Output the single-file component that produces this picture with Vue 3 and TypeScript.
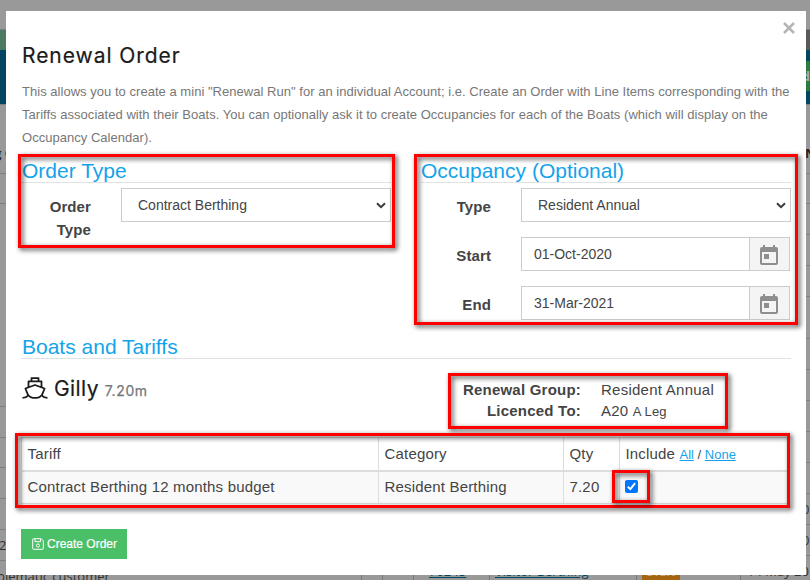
<script setup lang="ts">
import { ref } from 'vue'

interface Tariff {
  name: string
  category: string
  qty: string
  include: boolean
}

const orderType = ref('Contract Berthing')
const occupancyType = ref('Resident Annual')
const dates = ref([
  { label: 'Start', value: '01-Oct-2020' },
  { label: 'End', value: '31-Mar-2021' },
])
const tariffs = ref<Tariff[]>([
  { name: 'Contract Berthing 12 months budget', category: 'Resident Berthing', qty: '7.20', include: true },
])
const setAll = (value: boolean) => tariffs.value.forEach((t) => (t.include = value))
</script>

<template>
  <div class="page">
    <div class="backdrop" aria-hidden="true">
      <div class="strip photo"></div>
      <div class="strip nav"></div>
      <span class="nav-btn">d</span>
      <i v-for="n in 3" :key="'a' + n" class="rule left" :class="'la' + n"></i>
      <i v-for="n in 5" :key="'b' + n" class="rule left" :class="'lb' + n"></i>
      <i v-for="n in 13" :key="'c' + n" class="rule right" :class="'r' + n"></i>
      <b class="bit h-left">g C</b>
      <b class="bit h-right">N</b>
      <span class="bit two">2</span>
      <span class="bit customer">blematic customer</span>
      <span class="bit order-no">70245</span>
      <span class="bit berthing">Visitor Berthing</span>
      <span class="bit tag">Draft</span>
      <span class="bit date">14 May 20</span>
      <span class="bit z1">0</span>
      <span class="bit z2">0</span>
      <i v-for="n in 6" :key="'v' + n" class="vrule" :class="'v' + n"></i>
    </div>

    <section class="modal">
      <button class="close" aria-label="Close">
        <svg width="12" height="12" viewBox="0 0 12 12"><path d="M1 1 11 11M11 1 1 11" stroke="#b5b5b5" stroke-width="2.5" /></svg>
      </button>
      <h1><span>Renewal Order</span></h1>
      <p class="intro">
        <span class="i1">This allows you to create a mini "Renewal Run" for an individual Account; i.e. Create an Order with Line Items corresponding with the</span><br />
        <span class="i2">Tariffs associated with their Boats. You can optionally ask it to create Occupancies for each of the Boats (which will display on the</span><br />
        <span class="i3">Occupancy Calendar).</span>
      </p>

      <div class="columns">
        <div class="column">
          <h2><span>Order Type</span></h2>
          <div class="field">
            <label>Order<br />Type</label>
            <div class="select">
              <span>{{ orderType }}</span>
              <svg width="10" height="7" viewBox="0 0 10 7"><path d="M1 1.2 5 5.2 9 1.2" fill="none" stroke="#3a3a3a" stroke-width="2" /></svg>
            </div>
          </div>
        </div>
        <div class="column">
          <h2 class="occ"><span>Occupancy (Optional)</span></h2>
          <div class="field">
            <label>Type</label>
            <div class="select">
              <span>{{ occupancyType }}</span>
              <svg width="10" height="7" viewBox="0 0 10 7"><path d="M1 1.2 5 5.2 9 1.2" fill="none" stroke="#3a3a3a" stroke-width="2" /></svg>
            </div>
          </div>
          <div v-for="d in dates" :key="d.label" class="field">
            <label>{{ d.label }}</label>
            <div class="date-input">
              <span>{{ d.value }}</span>
              <div class="addon">
                <svg width="18" height="20" viewBox="0 0 18 20">
                  <path fill="#8e8e8e" fill-rule="evenodd" d="M3 0H5V2H13V0H15V2H16Q18 2 18 4V18Q18 20 16 20H2Q0 20 0 18V4Q0 2 2 2H3ZM2 7V18H16V7ZM4 9H9V14H4Z" />
                </svg>
              </div>
            </div>
          </div>
        </div>
      </div>

      <h2 class="boats"><span>Boats and Tariffs</span></h2>
      <div class="boat">
        <div class="boat-name">
          <svg width="26" height="22" viewBox="0 0 26 22" fill="none" stroke="#1b1b1b" stroke-width="1.8" stroke-linejoin="round">
            <path d="M9.5 4V1.2H16.5V4M6.5 10V4.4H19.5V10M6.2 18.3 3.4 11.5 13 8 22.6 11.5 19.8 18.3M.5 20.8C4 20.8 5 19.8 6.3 18.3 7.6 20 9 20.8 11 20.8H15C17 20.8 18.4 20 19.7 18.3 21 19.8 22 20.8 25.5 20.8" />
          </svg>
          <span class="gilly">Gilly</span>
          <span class="length">7.20m</span>
        </div>
        <dl>
          <dt class="rg">Renewal Group:</dt>
          <dd>Resident Annual</dd>
          <dt class="lt">Licenced To:</dt>
          <dd class="a20">A20 <small>A Leg</small></dd>
        </dl>
      </div>

      <table>
        <colgroup><col class="c1" /><col class="c2" /><col class="c3" /><col /></colgroup>
        <thead>
          <tr>
            <th>Tariff</th>
            <th>Category</th>
            <th>Qty</th>
            <th>Include <small><a @click="setAll(true)">All</a> / <a @click="setAll(false)">None</a></small></th>
          </tr>
        </thead>
        <tbody>
          <tr v-for="t in tariffs" :key="t.name">
            <td><span class="tn">{{ t.name }}</span></td>
            <td>{{ t.category }}</td>
            <td>{{ t.qty }}</td>
            <td class="include">
              <span class="check" role="checkbox" :aria-checked="t.include" @click="t.include = !t.include">
                <svg v-if="t.include" width="13" height="13" viewBox="0 0 13 13"><path d="M2.8 6.8 5.3 9.2 10.1 3.2" fill="none" stroke="#fff" stroke-width="1.9" /></svg>
              </span>
            </td>
          </tr>
        </tbody>
      </table>

      <button class="create">
        <svg width="12" height="12" viewBox="0 0 12 12" fill="none" stroke="#fff">
          <path d="M.7 1.5Q.7.7 1.5.7H9.2L11.3 2.8V10.5Q11.3 11.3 10.5 11.3H1.5Q.7 11.3.7 10.5ZM3 .7V3.7H8.5V.7" />
          <circle cx="6" cy="7.5" r="1.6" />
        </svg>
        <span>Create Order</span>
      </button>
    </section>

    <div class="mark m1"></div>
    <div class="mark m2"></div>
    <div class="mark m3"></div>
    <div class="mark m4"></div>
    <div class="mark m5"></div>
  </div>
</template>

<style>
body { margin: 0; overflow: hidden; }
</style>

<style scoped>
* { box-sizing: border-box; }
.page {
  position: relative;
  width: 810px;
  height: 580px;
  padding: 11px 4px 5px 6px;
  overflow: hidden;
  background: #999;
  color: #444;
  font-family: "Liberation Sans", Arial, sans-serif;
}
.backdrop { position: absolute; inset: 0; overflow: hidden; }
.strip { position: absolute; left: 0; width: 810px; }
.photo { top: 29px; height: 21px; background: linear-gradient(90deg, #4a7a62 0 400px, #5a5a5a 400px); border-top: 1px solid #808080; }
.nav { top: 50px; height: 55px; background: #044661; border-bottom: 1px solid #808080; }
.nav-btn { position: absolute; left: 796px; top: 61px; width: 14px; height: 30px; background: #2c7a44; color: #aaa; font: bold 13px/31px "Open Sans", sans-serif; text-align: right; }
.rule { position: absolute; height: 1px; background: #808080; }
.left { left: 0; width: 6px; }
.right { left: 806px; width: 4px; }
.la1 { top: 173px; } .la2 { top: 203px; } .la3 { top: 406px; }
.lb1 { top: 437px; } .lb2 { top: 467px; } .lb3 { top: 498px; } .lb4 { top: 529px; } .lb5 { top: 560px; }
.r1 { top: 173px; } .r2 { top: 203px; } .r3 { top: 234px; } .r4 { top: 265px; } .r5 { top: 296px; } .r6 { top: 338px; } .r7 { top: 369px; }
.r8 { top: 400px; } .r9 { top: 431px; } .r10 { top: 462px; } .r11 { top: 493px; } .r12 { top: 524px; } .r13 { top: 555px; }
.bit { position: absolute; white-space: nowrap; font: 13px/18px "Open Sans", sans-serif; color: #333; }
b.bit { font-weight: 700; color: #222; }
.h-left { left: -6px; top: 144px; }
.h-right { left: 805px; top: 144px; }
.two { left: -1px; top: 536px; }
.customer { left: -3px; top: 567px; }
.order-no { left: 429px; top: 562px; color: #044661; text-decoration: underline; }
.berthing { left: 495px; top: 562px; color: #044661; text-decoration: underline; }
.tag { left: 642px; top: 560px; width: 38px; height: 20px; background: #a5640f; color: #c8a87b; text-align: center; font-weight: 700; font-size: 11px; line-height: 24px; }
.date { left: 747px; top: 562px; }
.z1 { left: 802px; top: 500px; }
.z2 { left: 802px; top: 531px; }
.vrule { position: absolute; top: 575px; width: 1px; height: 5px; background: #777; }
.v1 { left: 361px; } .v2 { left: 382px; } .v3 { left: 413px; } .v4 { left: 489px; } .v5 { left: 636px; } .v6 { left: 740px; }

.modal { position: relative; width: 800px; height: 564px; padding: 33px 15px 0; background: #fff; }
.close { position: absolute; top: 11px; right: 11px; width: 12px; height: 12px; padding: 0; border: 0; background: none; line-height: 0; }
h1 { margin: 0; padding-left: 1px; height: 24px; font: 400 21px/24px Inter, sans-serif; letter-spacing: .95px; color: #1b1b1b; -webkit-text-stroke: .2px #1b1b1b; white-space: nowrap; }
.intro { margin: 12px 0 0; padding-left: 1px; height: 69px; font-size: 13px; line-height: 23px; color: #777; white-space: nowrap; }
.intro span { letter-spacing: .03px; }
.columns { display: flex; gap: 30px; margin-top: 11px; height: 176px; }
.column { width: 370px; }
h2 { margin: 0; height: 23px; border-bottom: 1px solid #e2e2e2; font-weight: 400; font-size: 21px; line-height: 21px; color: #14a3ea; padding-left: 1px; white-space: nowrap; }
.columns h2 { margin-bottom: 5px; }
h2.occ { padding-left: 0; }
.field { display: flex; height: 34px; margin-bottom: 15px; }
label { flex: none; width: 100px; padding: 7px 30px 0 0; text-align: right; font-weight: 700; font-size: 15px; line-height: 23px; letter-spacing: .1px; }
.select { display: flex; align-items: center; justify-content: space-between; width: 270px; height: 34px; padding: 0 4px 0 16px; border: 1px solid #ccc; font-size: 14px; }
.date-input { display: flex; width: 269px; height: 34px; border: 1px solid #ccc; font-size: 14px; }
.date-input span { flex: 1; padding-left: 12px; line-height: 32px; }
.addon { display: flex; align-items: center; justify-content: center; width: 40px; padding: 2px 2px 0 0; border-left: 1px solid #ccc; background: #f4f4f4; }
.boat { display: flex; justify-content: space-between; height: 78px; padding-top: 17px; }
.boat-name { display: flex; align-items: flex-start; padding: 1px 0 0 1px; color: #1b1b1b; }
.gilly { margin-left: 6px; font: 400 21px/24px Inter, sans-serif; letter-spacing: .4px; -webkit-text-stroke: .2px #1b1b1b; }
.length { margin-left: 6px; font: 400 14px/27px Inter, sans-serif; letter-spacing: .6px; color: #777; -webkit-text-stroke: .25px #777; }
dl { display: grid; grid-template-columns: 120px 190px; grid-auto-rows: 21px; column-gap: 20px; margin: 3px 0 0; font-size: 15px; line-height: 21px; white-space: nowrap; }
dt { text-align: right; font-weight: 700; letter-spacing: .22px; }
dd { margin: 0; letter-spacing: .25px; }
dd small { font-size: 13px; letter-spacing: .1px; }
table { width: 768px; table-layout: fixed; border-collapse: collapse; font-size: 15px; letter-spacing: .18px; border: 1px solid #ddd; white-space: nowrap; }
.c1 { width: 357px; } .c2 { width: 185px; } .c3 { width: 56px; }
th, td { height: 33px; padding: 0 5px 0 5.5px; border: 1px solid #ddd; text-align: left; font-weight: 400; line-height: 20px; }
th { border-bottom-width: 2px; padding-top: 1px; }
td.include { padding-left: 4.5px; }
tbody tr { background: #f9f9f9; }
th small { font-size: 13px; letter-spacing: 0; }
a { color: #14a3ea; text-decoration: underline; cursor: pointer; }
.check { display: block; width: 13px; height: 13px; margin-top: -1px; border-radius: 2px; background: #0075ff; line-height: 0; }
.create { display: flex; align-items: center; gap: 3px; width: 106px; height: 30px; margin-top: 25px; padding: 0 0 0 11px; border: 0; background: #4bbf67; color: #fff; font: 12px "Liberation Sans", Arial, sans-serif; -webkit-text-stroke: .2px #fff; white-space: nowrap; }
.mark { position: absolute; border: 3px solid #f00; filter: drop-shadow(2px 2px 2.5px rgba(0, 0, 0, .75)); pointer-events: none; }
.m1 { left: 18px; top: 154px; width: 377px; height: 94px; }
.m2 { left: 414px; top: 154px; width: 384px; height: 171px; }
.m3 { left: 448px; top: 373px; width: 280px; height: 56px; }
.m4 { left: 15px; top: 433px; width: 775px; height: 75px; }
.m5 { left: 612px; top: 470px; width: 38px; height: 33px; }
</style>
